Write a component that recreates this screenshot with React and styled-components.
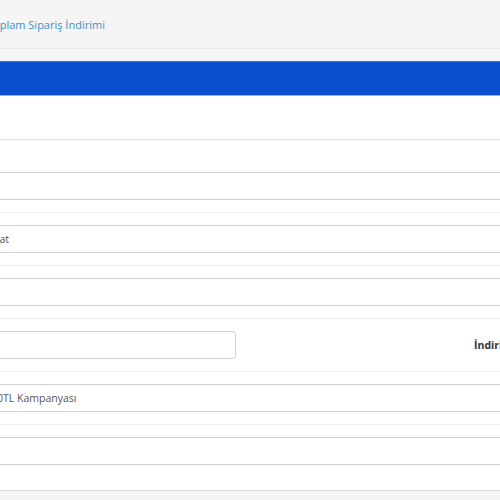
import React from 'react';
import styled, { createGlobalStyle } from 'styled-components';

const GlobalStyle = createGlobalStyle`
  html, body {
    margin: 0;
    padding: 0;
    background: #f5f5f5;
    overflow: hidden;
  }
  body {
    font-family: 'Open Sans', 'Liberation Sans', sans-serif;
    font-size: 10.5px;
    color: #555;
  }
`;

const Page = styled.div`
  width: 500px;
  height: 500px;
  overflow: hidden;
`;

const PageHeader = styled.div`
  height: 48px;
  border-bottom: 1px solid #e4e8ea;
  display: flex;
  align-items: center;
`;

const Breadcrumb = styled.a`
  margin-left: -13px;
  margin-top: 1px;
  font-size: 11px;
  color: #3d8fc6;
  text-decoration: none;
  white-space: nowrap;
`;

const Panel = styled.div`
  margin: 12px -20px 0;
  background: #fff;
  border-bottom: 1px solid #dcdcdc;
`;

const PanelHeading = styled.div`
  height: 33px;
  background: #0b4fd0;
  border-top: 1px solid #3a70da;
  border-bottom: 1px solid #8fb0e8;
`;

const PanelBody = styled.div`
  padding-bottom: 13px;
`;

const Tabs = styled.div`
  height: 43px;
  border-bottom: 1px solid #dedede;
  margin-bottom: 20px;
`;

const FormGroup = styled.div`
  display: flex;
  align-items: center;
  padding: 12px 0;
  & + & {
    border-top: 1px solid #eeeeee;
  }
`;

const Field = styled.div`
  box-sizing: border-box;
  height: 28px;
  flex: ${(p) => (p.$width ? `0 0 ${p.$width}px` : '1')};
  border: 1px solid #d2d2d2;
  border-radius: 3px;
  background: #fff;
  display: flex;
  align-items: center;
  overflow: hidden;
  white-space: nowrap;
  color: #555;
`;

const FieldText = styled.span`
  margin-left: ${(p) => p.$shift}px;
`;

const Label = styled.label`
  padding-left: 238px;
  font-weight: 700;
  color: #333;
  white-space: nowrap;
`;

export default function App() {
  return (
    <Page>
      <GlobalStyle />
      <PageHeader>
        <Breadcrumb href="#">Toplam Sipariş İndirimi</Breadcrumb>
      </PageHeader>
      <Panel>
        <PanelHeading />
        <PanelBody>
          <Tabs />
          <FormGroup>
            <Field />
          </FormGroup>
          <FormGroup>
            <Field>
              <FieldText $shift={-22}>Sabit Fiyat</FieldText>
            </Field>
          </FormGroup>
          <FormGroup>
            <Field />
          </FormGroup>
          <FormGroup>
            <Field $width={256} />
            <Label>İndirim Türü</Label>
          </FormGroup>
          <FormGroup>
            <Field>
              <FieldText $shift={4}>100TL Kampanyası</FieldText>
            </Field>
          </FormGroup>
          <FormGroup>
            <Field />
          </FormGroup>
        </PanelBody>
      </Panel>
    </Page>
  );
}
